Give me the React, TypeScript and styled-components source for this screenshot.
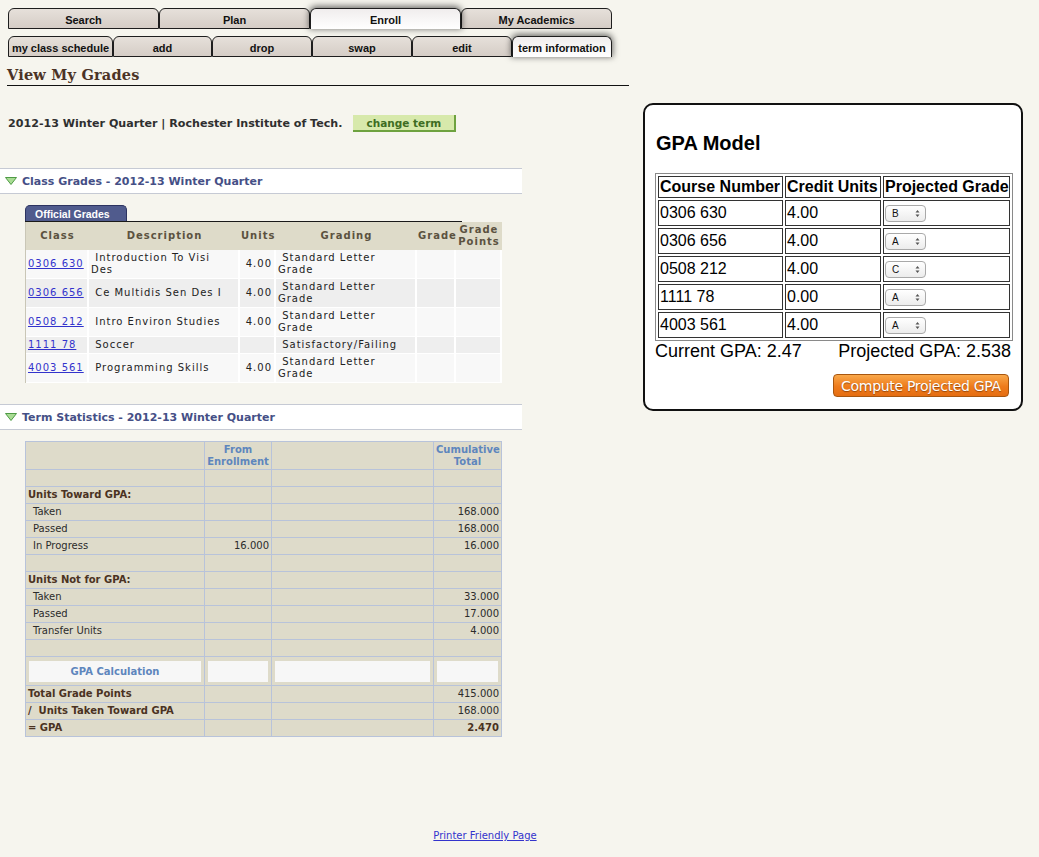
import React from "react";
import styled, { createGlobalStyle, css } from "styled-components";

const Global = createGlobalStyle`
  html, body { margin: 0; padding: 0; background: #f6f5ee; }
  body { font-family: "DejaVu Sans", Verdana, sans-serif; color: #333; }
`;

const Page = styled.div`
  display: flex;
  align-items: flex-start;
  min-height: 857px;
  width: 1039px;
  background: #f6f5ee;
`;

const LeftCol = styled.div`
  width: 630px;
  display: flex;
  flex-direction: column;
`;

const RightCol = styled.div`
  padding-top: 103px;
  padding-left: 13px;
`;

const TabRow = styled.div<{ $top: number }>`
  display: flex;
  margin-left: 8px;
  margin-top: ${(p) => p.$top}px;
  height: 21px;
`;

const Tab = styled.div<{ $w: number; $active?: boolean }>`
  box-sizing: border-box;
  width: ${(p) => p.$w}px;
  height: 21px;
  border: 1px solid #1e1e1e;
  border-radius: 6px 6px 0 0;
  background: linear-gradient(#e6e0da, #d5cdc6);
  font: bold 11px "Liberation Sans", Arial, sans-serif;
  color: #111;
  display: flex;
  align-items: center;
  justify-content: center;
  padding-top: 2px;
  white-space: nowrap;
  ${(p) =>
    p.$active &&
    css`
      background: linear-gradient(#f0eded, #ffffff);
      border-bottom: none;
      box-shadow: 0 -1px 6px 1px rgba(0, 0, 0, 0.55);
      position: relative;
      z-index: 1;
    `}
`;

const Title = styled.h1`
  margin: 9px 0 0 7px;
  padding-bottom: 2px;
  border-bottom: 1px solid #111;
  width: 622px;
  font: bold 14.5px "DejaVu Serif", Georgia, serif;
  letter-spacing: 0.2px;
  color: #4b3326;
`;

const TermLine = styled.div`
  display: flex;
  align-items: center;
  margin: 28px 0 0 8px;
  gap: 11px;
  font: bold 11.1px "DejaVu Sans", Verdana, sans-serif;
  color: #2f2f2f;
`;

const GreenButton = styled.div`
  box-sizing: border-box;
  width: 103px;
  height: 17px;
  background: #d7e9ab;
  border-right: 2px solid #6ea23f;
  border-bottom: 2px solid #6ea23f;
  color: #3e6d22;
  font: bold 10.5px "DejaVu Sans", Verdana, sans-serif;
  display: flex;
  align-items: center;
  justify-content: center;
  margin-top: 1px;
`;

const SectionHeader = styled.div<{ $top: number }>`
  box-sizing: border-box;
  width: 522px;
  height: 26px;
  margin-top: ${(p) => p.$top}px;
  background: #fff;
  border-top: 1px solid #c6cad4;
  border-bottom: 1px solid #c6cad4;
  display: flex;
  align-items: center;
  padding-left: 5px;
  gap: 5px;
  font: bold 11px "DejaVu Sans", Verdana, sans-serif;
  color: #454f86;
`;

const TabStrip = styled.div`
  margin: 11px 0 0 25px;
  width: 437px;
  height: 16px;
  border-bottom: 1px solid #1a1a1a;
`;

const BlueTab = styled.div`
  box-sizing: border-box;
  width: 102px;
  height: 16px;
  background: #505b8d;
  border: 1px solid #2c3360;
  border-bottom: none;
  border-radius: 5px 5px 0 0;
  color: #fff;
  font: bold 10.5px "Liberation Sans", Arial, sans-serif;
  padding-left: 9px;
  display: flex;
  align-items: center;
`;

const GradesTable = styled.table`
  margin-left: 25px;
  border-collapse: separate;
  border-spacing: 0;
  width: 476px;
  table-layout: fixed;
  border-left: 1px solid #c9c6b6;
  font: 10px "DejaVu Sans", Verdana, sans-serif;
  letter-spacing: 1px;
  color: #222;
`;

const GTh = styled.th`
  background: #dedbc9;
  color: #5b5240;
  font-weight: bold;
  height: 28px;
  padding: 0 1px;
  line-height: 12px;
  text-align: center;
  vertical-align: middle;
`;

const GTd = styled.td<{ $alt?: boolean; $right?: boolean }>`
  background: ${(p) => (p.$alt ? "#eeeeee" : "#f8f8f8")};
  border-right: 2px solid #ffffff;
  border-bottom: 1px solid #ffffff;
  padding: 1px 2px;
  line-height: 12px;
  vertical-align: middle;
  text-align: ${(p) => (p.$right ? "right" : "left")};
  white-space: nowrap;
`;

const ClassLink = styled.a`
  color: #3333cc;
  text-decoration: underline;
`;

const StatsTable = styled.table`
  margin: 11px 0 0 25px;
  border-collapse: collapse;
  table-layout: fixed;
  width: 476px;
  background: #dedbca;
  border: 1px solid #b8c3da;
  font: 10px "DejaVu Sans", Verdana, sans-serif;
  color: #2b2b2b;
`;

const STh = styled.th`
  border: 1px solid #b8c3da;
  color: #5e86bd;
  font-weight: bold;
  font-size: 10px;
  line-height: 12px;
  height: 27px;
  padding: 0 2px;
  text-align: center;
`;

const STd = styled.td<{ $bold?: boolean; $right?: boolean; $indent?: boolean }>`
  border: 1px solid #b8c3da;
  height: 16px;
  padding: 0 2px 0 ${(p) => (p.$indent ? 7 : 2)}px;
  line-height: 16px;
  white-space: nowrap;
  font-weight: ${(p) => (p.$bold ? "bold" : "normal")};
  color: ${(p) => (p.$bold ? "#4a3222" : "#2b2b2b")};
  text-align: ${(p) => (p.$right ? "right" : "left")};
`;

const CalcTd = styled.td`
  border: 1px solid #b8c3da;
  padding: 2px 3px;
  height: 24px;
`;

const CalcBox = styled.div`
  height: 21px;
  background: #f7f7f7;
  color: #5e86bd;
  font-weight: bold;
  font-size: 10px;
  display: flex;
  align-items: center;
  justify-content: center;
`;

const Footer = styled.div`
  width: 970px;
  text-align: center;
  margin-top: 93px;
  font: 10px "DejaVu Sans", Verdana, sans-serif;
`;

const FooterLink = styled.a`
  color: #3333cc;
  text-decoration: underline;
`;

/* GPA panel */
const Panel = styled.div`
  box-sizing: border-box;
  width: 380px;
  height: 308px;
  background: #fff;
  border: 2px solid #111;
  border-radius: 10px;
  padding: 0 10px;
  font-family: "Liberation Sans", Arial, sans-serif;
  color: #000;
`;

const PanelTitle = styled.h2`
  margin: 27px 0 0 1px;
  font: bold 20px "Liberation Sans", Arial, sans-serif;
  height: 26px;
`;

const GpaTable = styled.table`
  margin-top: 15px;
  border: 1px solid #8a8a8a;
  border-collapse: separate;
  border-spacing: 2px;
  table-layout: fixed;
  width: 356px;
  font-size: 16px;
`;

const GpaTh = styled.th<{ $w: number }>`
  box-sizing: border-box;
  width: ${(p) => p.$w}px;
  border: 1px solid #333;
  height: 22px;
  padding: 0 1px;
  line-height: 18px;
  font-weight: bold;
  text-align: left;
  white-space: nowrap;
`;

const GpaTd = styled.td`
  box-sizing: border-box;
  border: 1px solid #333;
  height: 26px;
  padding: 0 1px;
  white-space: nowrap;
`;

const FakeSelect = styled.div`
  box-sizing: border-box;
  width: 41px;
  height: 17px;
  border: 1px solid #a9a9a9;
  border-radius: 4px;
  background: linear-gradient(#ffffff, #ececec);
  display: flex;
  align-items: center;
  justify-content: space-between;
  padding: 0 5px 0 6px;
  font: 10px "Liberation Sans", Arial, sans-serif;
  color: #111;
`;

const GpaSummary = styled.div`
  display: flex;
  justify-content: space-between;
  width: 356px;
  margin-top: 0px;
  font-size: 18px;
  line-height: 21px;
`;

const ButtonRow = styled.div`
  display: flex;
  justify-content: flex-end;
  width: 354px;
  margin-top: 12px;
`;

const OrangeButton = styled.div`
  box-sizing: border-box;
  width: 176px;
  height: 23px;
  border: 1px solid #a8560f;
  border-radius: 4px;
  background: linear-gradient(#f9a84a, #ee7b1c 55%, #e56d12);
  color: #fff;
  font: 14px "DejaVu Sans", "Lucida Grande", sans-serif;
  letter-spacing: -0.3px;
  text-shadow: 0 1px 1px rgba(90, 40, 0, 0.6);
  display: flex;
  align-items: center;
  justify-content: center;
`;

const Arrows = () => (
  <svg width="5" height="9" viewBox="0 0 5 9">
    <path d="M0.5 3.5 L2.5 1 L4.5 3.5 Z M0.5 5.5 L2.5 8 L4.5 5.5 Z" fill="#555" />
  </svg>
);

const Triangle = () => (
  <svg width="12" height="8" viewBox="0 0 12 8">
    <path d="M0.5 0.5 H11.5 L6 7.5 Z" fill="#a9dc94" stroke="#4e9a45" strokeWidth="1" />
  </svg>
);

const topTabs = [
  { label: "Search", w: 151 },
  { label: "Plan", w: 151 },
  { label: "Enroll", w: 151, active: true },
  { label: "My Academics", w: 151 },
];

const subTabs = [
  { label: "my class schedule", w: 105 },
  { label: "add", w: 99 },
  { label: "drop", w: 100 },
  { label: "swap", w: 100 },
  { label: "edit", w: 100 },
  { label: "term information", w: 100, active: true },
];

type Grade = { cls: string; desc: [string, string?]; units: string; grading: [string, string?] };

const grades: Grade[] = [
  { cls: "0306 630", desc: ["\u00a0Introduction To Visi", "Des"], units: "4.00", grading: ["\u00a0Standard Letter", "Grade"] },
  { cls: "0306 656", desc: ["\u00a0Ce Multidis Sen Des I"], units: "4.00", grading: ["\u00a0Standard Letter", "Grade"] },
  { cls: "0508 212", desc: ["\u00a0Intro Environ Studies"], units: "4.00", grading: ["\u00a0Standard Letter", "Grade"] },
  { cls: "1111 78", desc: ["\u00a0Soccer"], units: "", grading: ["\u00a0Satisfactory/Failing"] },
  { cls: "4003 561", desc: ["\u00a0Programming Skills"], units: "4.00", grading: ["\u00a0Standard Letter", "Grade"] },
];

type StatRow =
  | { kind: "empty" }
  | { kind: "row"; label: string; bold?: boolean; indent?: boolean; enr?: string; cum?: string; cumBold?: boolean };

const statsTop: StatRow[] = [
  { kind: "empty" },
  { kind: "row", label: "Units Toward GPA:", bold: true },
  { kind: "row", label: "Taken", indent: true, cum: "168.000" },
  { kind: "row", label: "Passed", indent: true, cum: "168.000" },
  { kind: "row", label: "In Progress", indent: true, enr: "16.000", cum: "16.000" },
  { kind: "empty" },
  { kind: "row", label: "Units Not for GPA:", bold: true },
  { kind: "row", label: "Taken", indent: true, cum: "33.000" },
  { kind: "row", label: "Passed", indent: true, cum: "17.000" },
  { kind: "row", label: "Transfer Units", indent: true, cum: "4.000" },
  { kind: "empty" },
];

const statsBottom: StatRow[] = [
  { kind: "row", label: "Total Grade Points", bold: true, cum: "415.000" },
  { kind: "row", label: "/\u00a0 Units Taken Toward GPA", bold: true, cum: "168.000" },
  { kind: "row", label: "= GPA", bold: true, cum: "2.470", cumBold: true },
];

const renderStat = (r: StatRow, i: number) =>
  r.kind === "empty" ? (
    <tr key={i}>
      <STd />
      <STd />
      <STd />
      <STd />
    </tr>
  ) : (
    <tr key={i}>
      <STd $bold={r.bold} $indent={r.indent}>{r.label}</STd>
      <STd $right>{r.enr ?? ""}</STd>
      <STd />
      <STd $right $bold={r.cumBold}>{r.cum ?? ""}</STd>
    </tr>
  );

const model = [
  { num: "0306 630", units: "4.00", grade: "B" },
  { num: "0306 656", units: "4.00", grade: "A" },
  { num: "0508 212", units: "4.00", grade: "C" },
  { num: "1111 78", units: "0.00", grade: "A" },
  { num: "4003 561", units: "4.00", grade: "A" },
];

export default function App() {
  return (
    <Page>
      <Global />
      <LeftCol>
        <TabRow $top={8}>
          {topTabs.map((t) => (
            <Tab key={t.label} $w={t.w} $active={t.active}>{t.label}</Tab>
          ))}
        </TabRow>
        <TabRow $top={7}>
          {subTabs.map((t) => (
            <Tab key={t.label} $w={t.w} $active={t.active}>{t.label}</Tab>
          ))}
        </TabRow>
        <Title>View My Grades</Title>
        <TermLine>
          <span>2012-13 Winter Quarter | Rochester Institute of Tech.</span>
          <GreenButton>change term</GreenButton>
        </TermLine>

        <SectionHeader $top={36}>
          <Triangle />
          <span>Class Grades - 2012-13 Winter Quarter</span>
        </SectionHeader>
        <TabStrip>
          <BlueTab>Official Grades</BlueTab>
        </TabStrip>
        <GradesTable>
          <colgroup>
            <col style={{ width: 63 }} />
            <col style={{ width: 151 }} />
            <col style={{ width: 36 }} />
            <col style={{ width: 141 }} />
            <col style={{ width: 39 }} />
            <col style={{ width: 46 }} />
          </colgroup>
          <thead>
            <tr>
              <GTh>Class</GTh>
              <GTh>Description</GTh>
              <GTh>Units</GTh>
              <GTh>Grading</GTh>
              <GTh>Grade</GTh>
              <GTh>Grade Points</GTh>
            </tr>
          </thead>
          <tbody>
            {grades.map((g, i) => {
              const alt = i % 2 === 1;
              const h = g.grading[1] ? 27 : 15;
              return (
                <tr key={g.cls} style={{ height: h + 2 }}>
                  <GTd $alt={alt}>
                    <ClassLink href="#">{g.cls}</ClassLink>
                  </GTd>
                  <GTd $alt={alt}>
                    {g.desc[0]}
                    {g.desc[1] && (
                      <>
                        <br />
                        {g.desc[1]}
                      </>
                    )}
                  </GTd>
                  <GTd $alt={alt} $right>{g.units}</GTd>
                  <GTd $alt={alt}>
                    {g.grading[0]}
                    {g.grading[1] && (
                      <>
                        <br />
                        {g.grading[1]}
                      </>
                    )}
                  </GTd>
                  <GTd $alt={alt} />
                  <GTd $alt={alt} />
                </tr>
              );
            })}
          </tbody>
        </GradesTable>

        <SectionHeader $top={21}>
          <Triangle />
          <span>Term Statistics - 2012-13 Winter Quarter</span>
        </SectionHeader>
        <StatsTable>
          <colgroup>
            <col style={{ width: 179 }} />
            <col style={{ width: 67 }} />
            <col style={{ width: 162 }} />
            <col style={{ width: 68 }} />
          </colgroup>
          <thead>
            <tr>
              <STh />
              <STh>From<br />Enrollment</STh>
              <STh />
              <STh>Cumulative<br />Total</STh>
            </tr>
          </thead>
          <tbody>
            {statsTop.map(renderStat)}
            <tr>
              <CalcTd><CalcBox>GPA Calculation</CalcBox></CalcTd>
              <CalcTd><CalcBox /></CalcTd>
              <CalcTd><CalcBox /></CalcTd>
              <CalcTd><CalcBox /></CalcTd>
            </tr>
            {statsBottom.map((r, i) => renderStat(r, i + 100))}
          </tbody>
        </StatsTable>

        <Footer>
          <FooterLink href="#">Printer Friendly Page</FooterLink>
        </Footer>
      </LeftCol>

      <RightCol>
        <Panel>
          <PanelTitle>GPA Model</PanelTitle>
          <GpaTable>
            <thead>
              <tr>
                <GpaTh $w={125}>Course Number</GpaTh>
                <GpaTh $w={96}>Credit Units</GpaTh>
                <GpaTh $w={127}>Projected Grade</GpaTh>
              </tr>
            </thead>
            <tbody>
              {model.map((m) => (
                <tr key={m.num}>
                  <GpaTd>{m.num}</GpaTd>
                  <GpaTd>{m.units}</GpaTd>
                  <GpaTd>
                    <FakeSelect>
                      <span>{m.grade}</span>
                      <Arrows />
                    </FakeSelect>
                  </GpaTd>
                </tr>
              ))}
            </tbody>
          </GpaTable>
          <GpaSummary>
            <span>Current GPA: 2.47</span>
            <span>Projected GPA: 2.538</span>
          </GpaSummary>
          <ButtonRow>
            <OrangeButton>Compute Projected GPA</OrangeButton>
          </ButtonRow>
        </Panel>
      </RightCol>
    </Page>
  );
}
